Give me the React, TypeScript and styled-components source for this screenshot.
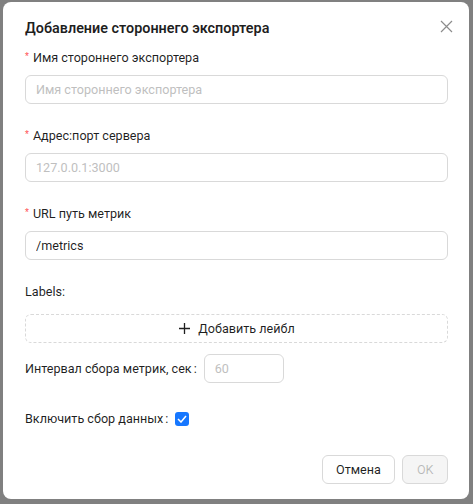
import React from "react";
import styled, { createGlobalStyle } from "styled-components";

const Global = createGlobalStyle`
  html, body { margin: 0; padding: 0; background: #808080; }
  body { font-family: Roboto, "Noto Sans", Arial, sans-serif; color: rgba(0,0,0,0.88); }
  * { box-sizing: border-box; }
`;

const Overlay = styled.div`
  width: 473px;
  height: 504px;
  padding: 2px 4px 5px 3px;
  background: #808080;
`;

const Modal = styled.div`
  background: #fff;
  border-radius: 8px;
  height: 497px;
  padding: 16px 21px 15px 22px;
  display: flex;
  flex-direction: column;
  position: relative;
`;

const Title = styled.h2`
  margin: 0;
  font-size: 14.4px;
  line-height: 22px;
  font-weight: 600;
  color: rgba(0,0,0,0.88);
`;

const Close = styled.button`
  position: absolute;
  top: 13px;
  right: 12px;
  width: 22px;
  height: 22px;
  border: none;
  background: none;
  padding: 0;
  display: flex;
  align-items: center;
  justify-content: center;
  color: rgba(0,0,0,0.45);
`;

const Field = styled.div<{ $mt: number }>`
  margin-top: ${(p) => p.$mt}px;
  display: flex;
  flex-direction: column;
  gap: 7px;
`;

const Label = styled.label`
  font-size: 12.6px;
  line-height: 20px;
  height: 20px;
  display: flex;
  align-items: center;
  color: rgba(0,0,0,0.88);
`;

const Req = styled.span`
  color: #ff4d4f;
  font-size: 10px;
  line-height: 1;
  margin: -3px 4px 0 0;
  font-family: "Liberation Sans", sans-serif;
`;

const Input = styled.input<{ $w?: number }>`
  height: 29px;
  width: ${(p) => (p.$w ? `${p.$w}px` : "100%")};
  border: 1px solid #d9d9d9;
  border-radius: 6px;
  padding: 0 10px;
  font-family: inherit;
  font-size: 12.6px;
  color: rgba(0,0,0,0.88);
  outline: none;
  &::placeholder { color: #bfbfbf; }
`;

const DashedButton = styled.button`
  margin-top: 12px;
  height: 29px;
  width: 100%;
  border: 1px dashed #d9d9d9;
  border-radius: 6px;
  background: #fff;
  font-family: inherit;
  font-size: 12.6px;
  color: rgba(0,0,0,0.88);
  display: flex;
  align-items: center;
  justify-content: center;
  gap: 7px;
`;

const Row = styled.div<{ $mt: number }>`
  margin-top: ${(p) => p.$mt}px;
  display: flex;
  align-items: center;
  font-size: 12.6px;
  height: 29px;
  color: rgba(0,0,0,0.88);
`;

const Colon = styled.span`
  margin: 0 7px 0 2px;
`;

const Check = styled.span`
  width: 14px;
  height: 14px;
  border-radius: 3px;
  background: #1677ff;
  display: inline-flex;
  align-items: center;
  justify-content: center;
`;

const Footer = styled.div`
  margin-top: auto;
  display: flex;
  justify-content: flex-end;
  gap: 7px;
`;

const Button = styled.button<{ $disabled?: boolean }>`
  height: 29px;
  padding: 0 13.5px;
  border-radius: 6px;
  border: 1px solid #d9d9d9;
  font-family: inherit;
  font-size: 12.6px;
  background: ${(p) => (p.$disabled ? "#f5f5f5" : "#fff")};
  color: ${(p) => (p.$disabled ? "rgba(0,0,0,0.25)" : "rgba(0,0,0,0.88)")};
`;

export default function App() {
  return (
    <>
      <Global />
      <Overlay>
        <Modal>
          <Title>Добавление стороннего экспортера</Title>
          <Close aria-label="close">
            <svg width="13" height="13" viewBox="0 0 13 13">
              <path d="M1 1L12 12M12 1L1 12" stroke="currentColor" strokeWidth="1.2" />
            </svg>
          </Close>
          <Field $mt={8}>
            <Label><Req>*</Req>Имя стороннего экспортера</Label>
            <Input placeholder="Имя стороннего экспортера" />
          </Field>
          <Field $mt={22}>
            <Label><Req>*</Req>Адрес:порт сервера</Label>
            <Input placeholder="127.0.0.1:3000" />
          </Field>
          <Field $mt={22}>
            <Label><Req>*</Req>URL путь метрик</Label>
            <Input defaultValue="/metrics" />
          </Field>
          <Field $mt={22}>
            <Label>Labels:</Label>
          </Field>
          <DashedButton>
            <svg width="13" height="13" viewBox="0 0 13 13">
              <path d="M6.5 1V12M1 6.5H12" stroke="currentColor" strokeWidth="1.3" />
            </svg>
            Добавить лейбл
          </DashedButton>
          <Row $mt={11}>
            Интервал сбора метрик, сек<Colon>:</Colon>
            <Input $w={80} placeholder="60" />
          </Row>
          <Row $mt={21}>
            Включить сбор данных<Colon>:</Colon>
            <Check>
              <svg width="10" height="8" viewBox="0 0 10 8">
                <path d="M1 4L4 7L9 1" stroke="#fff" strokeWidth="1.5" fill="none" />
              </svg>
            </Check>
          </Row>
          <Footer>
            <Button>Отмена</Button>
            <Button $disabled>OK</Button>
          </Footer>
        </Modal>
      </Overlay>
    </>
  );
}
